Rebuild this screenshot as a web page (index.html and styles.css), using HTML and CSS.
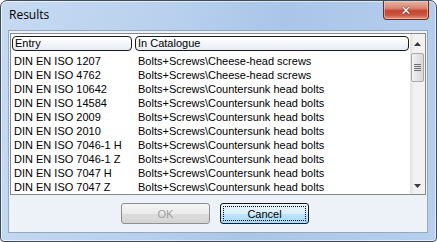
FILE: index.html
```html
<!DOCTYPE html>
<html>
<head>
<meta charset="utf-8">
<link rel="stylesheet" href="styles.css">
</head>
<body>
<div class="window">
  <div class="titlebar">
    <span class="title">Results</span>
    <div class="close"><span class="x">✕</span></div>
  </div>
  <div class="client">
    <div class="list">
      <div class="list-main">
        <div class="header">
          <div class="hcol c1">Entry</div>
          <div class="hcol c2">In Catalogue</div>
        </div>
        <div class="rows">
          <div class="row"><span class="c1">DIN EN ISO 1207</span><span class="c2">Bolts+Screws\Cheese-head screws</span></div>
          <div class="row"><span class="c1">DIN EN ISO 4762</span><span class="c2">Bolts+Screws\Cheese-head screws</span></div>
          <div class="row"><span class="c1">DIN EN ISO 10642</span><span class="c2">Bolts+Screws\Countersunk head bolts</span></div>
          <div class="row"><span class="c1">DIN EN ISO 14584</span><span class="c2">Bolts+Screws\Countersunk head bolts</span></div>
          <div class="row"><span class="c1">DIN EN ISO 2009</span><span class="c2">Bolts+Screws\Countersunk head bolts</span></div>
          <div class="row"><span class="c1">DIN EN ISO 2010</span><span class="c2">Bolts+Screws\Countersunk head bolts</span></div>
          <div class="row"><span class="c1">DIN EN ISO 7046-1 H</span><span class="c2">Bolts+Screws\Countersunk head bolts</span></div>
          <div class="row"><span class="c1">DIN EN ISO 7046-1 Z</span><span class="c2">Bolts+Screws\Countersunk head bolts</span></div>
          <div class="row"><span class="c1">DIN EN ISO 7047 H</span><span class="c2">Bolts+Screws\Countersunk head bolts</span></div>
          <div class="row"><span class="c1">DIN EN ISO 7047 Z</span><span class="c2">Bolts+Screws\Countersunk head bolts</span></div>
        </div>
      </div>
      <div class="scrollbar">
        <div class="arrow up"><svg width="7" height="4" viewBox="0 0 7 4"><path d="M0 4 L3.5 0 L7 4 Z" fill="#3c3c3c"/></svg></div>
        <div class="thumb"><span class="grip"></span></div>
        <div class="track"></div>
        <div class="arrow down"><svg width="7" height="4" viewBox="0 0 7 4"><path d="M0 0 L3.5 4 L7 0 Z" fill="#3c3c3c"/></svg></div>
      </div>
    </div>
    <div class="buttons">
      <div class="btn disabled">OK</div>
      <div class="btn default"><span class="focus">Cancel</span></div>
    </div>
  </div>
</div>
</body>
</html>
```

FILE: styles.css
```css
html, body {
  margin: 0;
  padding: 0;
  background: #ffffff;
}
body {
  width: 437px;
  height: 242px;
  overflow: hidden;
  font-family: "Liberation Sans", Arial, sans-serif;
  font-size: 11px;
  color: #000;
}
.window {
  position: relative;
  box-sizing: border-box;
  width: 437px;
  height: 242px;
  border: 1px solid #3f4c5c;
  border-radius: 7px 7px 4px 4px;
  background: linear-gradient(100deg, #c6daf1 0%, #b9d1ee 35%, #a9c5e8 60%, #b8cfee 100%);
  box-shadow: inset 0 0 0 1px rgba(255,255,255,0.6);
  display: flex;
  flex-direction: column;
  padding: 0 8px 8px 7px;
}
.titlebar {
  height: 29px;
  flex: none;
  display: flex;
  align-items: center;
}
.title {
  font-family: "Open Sans", "Noto Sans", sans-serif;
  font-size: 12px;
  color: #000;
  padding-left: 1px;
  margin-top: -2px;
}
.close {
  position: absolute;
  top: 0;
  right: 7px;
  width: 46px;
  height: 19px;
  box-sizing: border-box;
  border: 1px solid #6d2a22;
  border-top: none;
  border-radius: 0 0 4px 4px;
  background: linear-gradient(180deg, #e9b2a3 0%, #d98573 40%, #c4442f 55%, #cc5a44 80%, #e19a86 100%);
  box-shadow: inset 0 0 0 1px rgba(255,220,210,0.5);
  display: flex;
  align-items: center;
  justify-content: center;
}
.close .x {
  font-family: "DejaVu Sans", sans-serif;
  font-weight: bold;
  font-size: 13px;
  color: #fff;
  line-height: 1;
  text-shadow: 0 0 1px #4a1a14, 0 0 1px #4a1a14;
}
.client {
  flex: 1;
  background: #edf1f8;
  border: 1px solid #97a7bd;
  display: flex;
  flex-direction: column;
}
.list {
  margin: 2px 1px 0 1px;
  height: 162px;
  box-sizing: border-box;
  border: 1px solid #828790;
  background: #fff;
  display: flex;
}
.list-main {
  flex: 1;
  display: flex;
  flex-direction: column;
  padding: 2px 1px 0 1px;
}
.header {
  display: flex;
  gap: 3px;
  height: 15px;
}
.hcol {
  box-sizing: border-box;
  height: 15px;
  border: 1px solid #1a1a1a;
  border-radius: 4px;
  background: linear-gradient(180deg, #ffffff 0%, #f3f6fa 50%, #e6edf5 100%);
  padding-left: 2px;
  line-height: 13px;
  font-size: 11px;
}
.hcol.c1 { width: 120px; }
.hcol.c2 { width: 274px; }
.rows {
  padding-top: 3px;
}
.row {
  display: flex;
  height: 14px;
  line-height: 14px;
  white-space: nowrap;
}
.row .c1 {
  width: 124px;
  padding-left: 2px;
}
.row .c2 {
  flex: 1;
}
.scrollbar {
  width: 17px;
  display: flex;
  flex-direction: column;
  background: linear-gradient(90deg, #e3e3e3, #f2f2f2 30%, #f2f2f2);
}
.arrow {
  height: 17px;
  display: flex;
  align-items: center;
  justify-content: center;
}
.up { height: 19px; }
.thumb {
  margin: 0 1px;
  height: 29px;
  box-sizing: border-box;
  border: 1px solid #a8a8a8;
  border-radius: 2px;
  background: linear-gradient(90deg, #f3f3f3, #e4e4e4 50%, #d8d8d8);
  display: flex;
  align-items: center;
  justify-content: center;
}
.grip {
  width: 7px;
  height: 7px;
  background: repeating-linear-gradient(180deg, #6e6e6e 0 1px, transparent 1px 2px);
}
.track { flex: 1; }
.buttons {
  display: flex;
  justify-content: flex-start;
  gap: 10px;
  padding-top: 8px;
  padding-left: 112px;
}
.btn {
  width: 89px;
  height: 21px;
  box-sizing: border-box;
  border-radius: 3px;
  display: flex;
  align-items: center;
  justify-content: center;
  font-size: 11px;
}
.btn.disabled {
  border: 1px solid #8f8f8f;
  background: linear-gradient(180deg, #f4f4f4 0%, #ebebeb 50%, #dddddd 51%, #d4d4d4 100%);
  color: #a0a0a0;
}
.btn.default {
  border: 1px solid #1a1a1a;
  background: linear-gradient(180deg, #eaf6fd 0%, #d9f0fc 50%, #bee6fd 51%, #a7d9f5 100%);
  padding: 2px;
}
.focus {
  flex: 1;
  align-self: stretch;
  border: 1px dotted #000;
  display: flex;
  align-items: center;
  justify-content: center;
}
```
